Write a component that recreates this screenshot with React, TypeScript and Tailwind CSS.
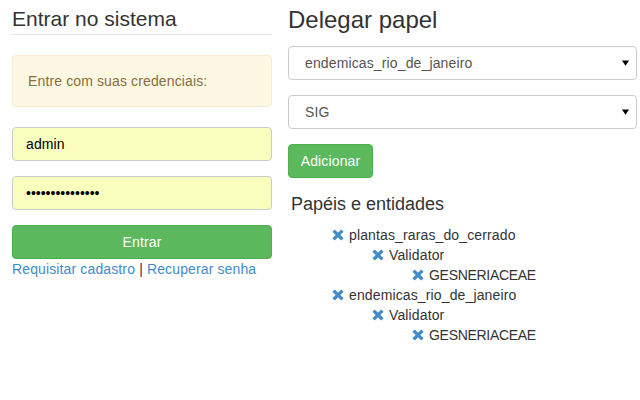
import React from 'react';

const RemoveIcon = () => (
  <svg viewBox="0 0 12 12" className="w-3 h-3 shrink-0" aria-hidden="true">
    <g stroke="#428bca" strokeWidth="3.3">
      <line x1="1.6" y1="1.6" x2="10.4" y2="10.4" />
      <line x1="10.4" y1="1.6" x2="1.6" y2="10.4" />
    </g>
  </svg>
);

const Caret = () => (
  <svg viewBox="0 0 8 6" className="w-[7px] h-[6px]" aria-hidden="true">
    <path d="M0 0h8L4 6z" fill="#000" />
  </svg>
);

const FakeSelect = ({value}: {value: string}) => (
  <div className="h-[34px] border border-[#ccc] rounded-[4px] bg-white flex items-center justify-between pl-[16px] pr-[7px] text-[14px] text-[#555]">
    <span>{value}</span>
    <Caret />
  </div>
);

const TreeItem = ({label, level}: {label: string; level: number}) => {
  const pad = level === 0 ? 'pl-[40px]' : level === 1 ? 'pl-[80px]' : 'pl-[120px]';
  // all-caps labels render a bit tighter in the original
  const caps = label === label.toUpperCase();
  return (
    <li className={`${pad} flex items-center gap-[5px] h-5 leading-5`}>
      <RemoveIcon />
      <span className={caps ? 'tracking-[-0.3px]' : ''}>{label}</span>
    </li>
  );
};

export default function App() {
  return (
    <div
      className="w-[640px] h-[400px] bg-white text-[#333] text-[14px] leading-5 tracking-[0.13px] flex"
      style={{fontFamily: '"Liberation Sans", Arial, Helvetica, sans-serif'}}
    >
      <div className="w-[260px] ml-[12px] pt-[4px]">
        <div className="h-[31px] leading-[30px] text-[21px] tracking-normal border-b border-[#e5e5e5]">
          Entrar no sistema
        </div>
        <div className="mt-[20px] h-[52px] px-[15px] flex items-center bg-[#fcf8e3] border border-[#faebcc] rounded-[4px] text-[#8a6d3b]">
          Entre com suas credenciais:
        </div>
        <div className="mt-[20px] h-[34px] px-[13px] flex items-center bg-[#faffbd] border border-[#ccc] rounded-[4px] text-black">
          admin
        </div>
        <div className="mt-[15px] h-[34px] px-[13px] flex items-center bg-[#faffbd] border border-[#ccc] rounded-[4px] text-black tracking-normal">
          •••••••••••••••
        </div>
        <button className="mt-[15px] w-full h-[34px] bg-[#5cb85c] border border-[#4cae4c] rounded-[4px] text-white">
          Entrar
        </button>
        <div className="h-5">
          <a className="text-[#428bca]">Requisitar cadastro</a>{' '}
          <span>|</span>{' '}
          <a className="text-[#428bca]">Recuperar senha</a>
        </div>
      </div>

      <div className="w-[349px] ml-[16px]">
        <h3 className="mt-[7px] h-[26px] leading-[26px] text-[24px] tracking-normal">Delegar papel</h3>
        <div className="mt-[13px]">
          <FakeSelect value="endemicas_rio_de_janeiro" />
        </div>
        <div className="mt-[15px]">
          <FakeSelect value="SIG" />
        </div>
        <button className="mt-[15px] h-[34px] w-[85px] bg-[#5cb85c] border border-[#4cae4c] rounded-[4px] text-white">
          Adicionar
        </button>
        <h4 className="mt-[16px] pl-[3px] h-5 leading-5 text-[18px] tracking-normal">Papéis e entidades</h4>
        <ul className="mt-[11px] pl-[4px]">
          <TreeItem level={0} label="plantas_raras_do_cerrado" />
          <TreeItem level={1} label="Validator" />
          <TreeItem level={2} label="GESNERIACEAE" />
          <TreeItem level={0} label="endemicas_rio_de_janeiro" />
          <TreeItem level={1} label="Validator" />
          <TreeItem level={2} label="GESNERIACEAE" />
        </ul>
      </div>
    </div>
  );
}
